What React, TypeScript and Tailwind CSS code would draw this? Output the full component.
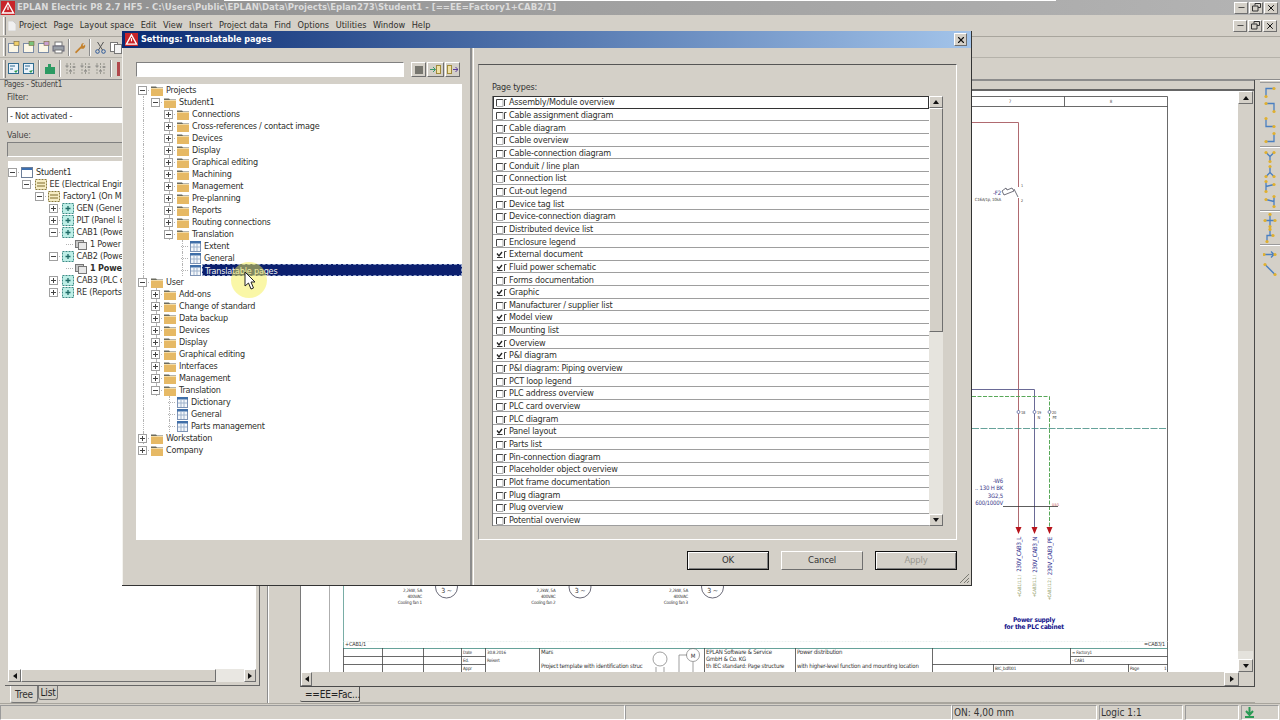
import type { ReactNode } from 'react';
import { Minus, X } from 'lucide-react';

const raised = 'border border-t-white border-l-white border-r-[#6f6f6f] border-b-[#6f6f6f]';
const sunken = 'border border-t-[#808080] border-l-[#808080] border-r-white border-b-white';

function Arrow({ dir }: { dir: 'up' | 'down' | 'left' | 'right' }) {
  const pts = { up: '1,6 4,2 7,6', down: '1,2 4,6 7,2', left: '6,1 2,4 6,7', right: '2,1 6,4 2,7' }[dir];
  return (
    <svg width="8" height="8" viewBox="0 0 8 8">
      <polygon points={pts} fill="#111" />
    </svg>
  );
}

function ScrollBtn({ dir, className = '' }: { dir: 'up' | 'down' | 'left' | 'right'; className?: string }) {
  return <div className={`flex items-center justify-center bg-[#d4d0c8] ${raised} ${className}`}><Arrow dir={dir} /></div>;
}

function Folder() {
  return (
    <svg width="12" height="11" viewBox="0 0 12 11" className="shrink-0">
      <path d="M0 1.5h5l1 1h6v1H0z" fill="#6b6b5e" />
      <rect x="0" y="3" width="12" height="8" fill="#e6b965" />
      <rect x="0" y="3" width="12" height="1" fill="#f4dca8" />
    </svg>
  );
}

function TableIcon() {
  return (
    <svg width="11" height="11" viewBox="0 0 11 11" className="shrink-0">
      <rect x="0.5" y="0.5" width="10" height="10" fill="#f4f7fb" stroke="#7d93b5" />
      <rect x="0" y="0" width="11" height="2.5" fill="#3f6ea8" />
      <path d="M4 3v7M7 3v7M1 6h9" stroke="#9fb3cc" />
    </svg>
  );
}

function TreeIcon({ kind }: { kind: string }) {
  if (kind === 'folder') return <Folder />;
  if (kind === 'table') return <TableIcon />;
  if (kind === 'window') {
    return (
      <svg width="12" height="11" viewBox="0 0 12 11" className="shrink-0">
        <rect x="0.5" y="0.5" width="11" height="10" fill="#fff" stroke="#6d7f99" />
        <rect x="1" y="1" width="10" height="2" fill="#3c6fb0" />
      </svg>
    );
  }
  if (kind === 'page') {
    return (
      <svg width="12" height="11" viewBox="0 0 12 11" className="shrink-0">
        <rect x="0.5" y="1.5" width="8" height="7" fill="#c9c9c9" stroke="#777" />
        <rect x="3.5" y="3.5" width="8" height="7" fill="#e8e8e8" stroke="#777" />
      </svg>
    );
  }
  if (kind === 'plus') {
    return (
      <svg width="12" height="11" viewBox="0 0 12 11" className="shrink-0">
        <rect x="0.5" y="0.5" width="11" height="10" fill="#bdeee6" stroke="#3c8c86" strokeDasharray="2 1" />
        <path d="M3.5 5.5h5M6 3v5" stroke="#1f6a66" strokeWidth="1.3" />
      </svg>
    );
  }
  return (
    <svg width="12" height="11" viewBox="0 0 12 11" className="shrink-0">
      <rect x="0.5" y="0.5" width="11" height="10" fill="#f6edc4" stroke="#8a7a3a" strokeDasharray="2 1" />
      <path d="M2 4h8M2 7h8" stroke="#7c6a2a" />
    </svg>
  );
}

type Node = {
  label: string;
  level: number;
  exp?: '+' | '-';
  icon: string;
  guides?: number[];
  selected?: boolean;
  bold?: boolean;
};

function TreeRow({ node, base, pitch }: { node: Node; base: number; pitch: number }) {
  const left = base + node.level * pitch;
  return (
    <div className="relative flex h-[12px] items-center" style={{ paddingLeft: left }}>
      {node.guides?.map((g) => (
        <span key={g} className="absolute top-0 bottom-0 w-px border-l border-dotted border-[#b4b4b4]" style={{ left: g }} />
      ))}
      <span className="absolute h-px w-[7px] border-t border-dotted border-[#b4b4b4]" style={{ left: left + 4 }} />
      <span className="relative flex h-[9px] w-[9px] shrink-0 items-center justify-center">
        {node.exp && (
          <span className="relative flex h-[9px] w-[9px] items-center justify-center border border-[#a0a0a0] bg-white">
            <span className="h-px w-[5px] bg-[#444]" />
            {node.exp === '+' && <span className="absolute h-[5px] w-px bg-[#444]" />}
          </span>
        )}
      </span>
      <span className="relative ml-[4px] flex"><TreeIcon kind={node.icon} /></span>
      <span
        className={`relative ml-[1px] whitespace-nowrap px-[2px] leading-[12px] ${
          node.selected ? 'flex-1 border border-dashed border-[#8fa0c8] bg-[#0b1f6e] text-[#f2f2f2] h-[12px] leading-[10px]' : 'text-[#30302c]'
        } ${node.bold ? 'font-bold' : ''}`}
      >
        {node.label}
      </span>
    </div>
  );
}

const settingsTree: Node[] = [
  { label: 'Projects', level: 0, exp: '-', icon: 'folder' },
  { label: 'Student1', level: 1, exp: '-', icon: 'folder', guides: [7] },
  ...['Connections', 'Cross-references / contact image', 'Devices', 'Display', 'Graphical editing', 'Machining', 'Management', 'Pre-planning', 'Reports', 'Routing connections'].map(
    (label) => ({ label, level: 2, exp: '+' as const, icon: 'folder', guides: [7, 33] }),
  ),
  { label: 'Translation', level: 2, exp: '-', icon: 'folder', guides: [7, 33] },
  { label: 'Extent', level: 3, icon: 'table', guides: [7, 46] },
  { label: 'General', level: 3, icon: 'table', guides: [7, 46] },
  { label: 'Translatable pages', level: 3, icon: 'table', guides: [7, 46], selected: true },
  { label: 'User', level: 0, exp: '-', icon: 'folder', guides: [7] },
  ...['Add-ons', 'Change of standard', 'Data backup', 'Devices', 'Display', 'Graphical editing', 'Interfaces', 'Management'].map(
    (label) => ({ label, level: 1, exp: '+' as const, icon: 'folder', guides: [7, 20] }),
  ),
  { label: 'Translation', level: 1, exp: '-', icon: 'folder', guides: [7, 20] },
  { label: 'Dictionary', level: 2, icon: 'table', guides: [7, 33] },
  { label: 'General', level: 2, icon: 'table', guides: [7, 33] },
  { label: 'Parts management', level: 2, icon: 'table', guides: [7, 33] },
  { label: 'Workstation', level: 0, exp: '+', icon: 'folder', guides: [7] },
  { label: 'Company', level: 0, exp: '+', icon: 'folder' },
];

const pagesTree: Node[] = [
  { label: 'Student1', level: 0, exp: '-', icon: 'window' },
  { label: 'EE (Electrical Engineering)', level: 1, exp: '-', icon: 'module' },
  { label: 'Factory1 (On Machine)', level: 2, exp: '-', icon: 'module' },
  { label: 'GEN (General)', level: 3, exp: '+', icon: 'plus' },
  { label: 'PLT (Panel layout)', level: 3, exp: '+', icon: 'plus' },
  { label: 'CAB1 (Power supply)', level: 3, exp: '-', icon: 'plus' },
  { label: '1 Power distribution', level: 4, icon: 'page' },
  { label: 'CAB2 (Power supply)', level: 3, exp: '-', icon: 'plus' },
  { label: '1 Power distribution', level: 4, icon: 'page', bold: true },
  { label: 'CAB3 (PLC cabinet)', level: 3, exp: '+', icon: 'plus' },
  { label: 'RE (Reports)', level: 3, exp: '+', icon: 'plus' },
];

const pageTypes: [string, boolean][] = [
  ['Assembly/Module overview', false],
  ['Cable assignment diagram', false],
  ['Cable diagram', false],
  ['Cable overview', false],
  ['Cable-connection diagram', false],
  ['Conduit / line plan', false],
  ['Connection list', false],
  ['Cut-out legend', false],
  ['Device tag list', false],
  ['Device-connection diagram', false],
  ['Distributed device list', false],
  ['Enclosure legend', false],
  ['External document', true],
  ['Fluid power schematic', true],
  ['Forms documentation', false],
  ['Graphic', true],
  ['Manufacturer / supplier list', false],
  ['Model view', true],
  ['Mounting list', false],
  ['Overview', true],
  ['P&I diagram', true],
  ['P&I diagram: Piping overview', false],
  ['PCT loop legend', false],
  ['PLC address overview', false],
  ['PLC card overview', false],
  ['PLC diagram', false],
  ['Panel layout', true],
  ['Parts list', false],
  ['Pin-connection diagram', false],
  ['Placeholder object overview', false],
  ['Plot frame documentation', false],
  ['Plug diagram', false],
  ['Plug overview', false],
  ['Potential overview', false],
];

function Check({ on }: { on: boolean }) {
  return (
    <svg width="12" height="11" viewBox="0 0 12 11" className="shrink-0">
      {on ? (
        <>
          <path d="M1 9.500h5.500" fill="none" stroke="#333" />
          <path d="M1 5.500l2 2.500 3-4" fill="none" stroke="#222" strokeWidth="1.300" />
        </>
      ) : (
        <>
          <path d="M.5 10V3.500h6.500" fill="none" stroke="#444" />
          <path d="M.5 10.500h6.500V3.500" fill="none" stroke="#aaa" />
        </>
      )}
      <path d="M8.500 10V3.500h2" fill="none" stroke="#444" />
    </svg>
  );
}

function WinButton({ children }: { children: ReactNode }) {
  return <div className={`flex h-[12px] w-[14px] items-center justify-center bg-[#d4d0c8] ${raised}`}>{children}</div>;
}

function WinControls() {
  return (
    <div className="flex gap-px">
      <WinButton><Minus size={9} strokeWidth={2} color="#222" /></WinButton>
      <WinButton>
        <svg width="9" height="9" viewBox="0 0 9 9"><path d="M3 2.500V.5h5.500v4H6M.5 3h5.500v5H.5z" fill="none" stroke="#333" /></svg>
      </WinButton>
      <WinButton><X size={10} strokeWidth={2.4} color="#111" /></WinButton>
    </div>
  );
}

function EplanLogo({ size }: { size: number }) {
  return (
    <svg width={size} height={size} viewBox="0 0 14 14" className="shrink-0">
      <rect width="14" height="14" fill="#c8242a" />
      <path d="M7 2l5.500 10h-11z" fill="none" stroke="#fff" strokeWidth="1.4" />
      <path d="M7 5.500v3.500" stroke="#fff" strokeWidth="1.2" />
    </svg>
  );
}

function Sep() {
  return <div className="mx-[2px] h-[17px] w-[2px] border-l border-r border-l-[#8c8c8c] border-r-white" />;
}

function Grip() {
  return <div className="ml-[2px] h-[18px] w-[3px] border-l border-r border-l-white border-r-[#808080]" />;
}

function Tool({ children }: { children: ReactNode }) {
  return <div className="flex h-[16px] w-[15px] items-center justify-center">{children}</div>;
}

function PageTool({ tint }: { tint: string }) {
  return (
    <svg width="13" height="13" viewBox="0 0 13 13">
      <rect x="1.500" y="2.500" width="10" height="9" fill="#fbf6e6" stroke="#7b8ca6" />
      <rect x="7" y="0.500" width="5" height="4" fill={tint} stroke="#7b6a3a" strokeWidth="0.6" />
    </svg>
  );
}

function ListTool() {
  return (
    <svg width="13" height="13" viewBox="0 0 13 13">
      <rect x="1.500" y="1.500" width="10" height="10" fill="#eaf3fb" stroke="#2f6b90" />
      <path d="M3 4h5M3 7h3" stroke="#2f6b90" />
      <path d="M7 9l4-1-2 3z" fill="#2a9a4a" />
    </svg>
  );
}

function FilterTool() {
  return (
    <svg width="13" height="14" viewBox="0 0 13 14" stroke="#9a9a90" fill="none">
      <path d="M3 1v12M6.500 1v12M10 1v12" strokeDasharray="2 1" />
      <path d="M1.500 4h3M5 9h3M8.500 5h3" stroke="#777" />
    </svg>
  );
}

function Toolbars() {
  return (
    <>
      <div className="flex h-[21px] items-center border-b border-[#b5b2aa] pl-[1px]">
        <Grip />
        <Tool><PageTool tint="#f1cf6b" /></Tool>
        <Tool><PageTool tint="#79c27a" /></Tool>
        <Tool><PageTool tint="#c9a0d0" /></Tool>
        <Tool>
          <svg width="13" height="13" viewBox="0 0 13 13">
            <rect x="3" y="1" width="7" height="4" fill="#fff" stroke="#777" />
            <rect x="1" y="5" width="11" height="5" fill="#9aa0a8" stroke="#667" />
            <rect x="3" y="9" width="7" height="3" fill="#fff" stroke="#777" />
          </svg>
        </Tool>
        <Sep />
        <Tool>
          <svg width="13" height="13" viewBox="0 0 13 13"><path d="M2 11l6-6a3 3 0 0 1 3-3L9.500 4 10.500 5 12 3.500a3 3 0 0 1-4 4l-5 5z" fill="#c4812c" /></svg>
        </Tool>
        <Sep />
        <Tool>
          <svg width="13" height="13" viewBox="0 0 13 13" fill="none" stroke="#2e5a9a"><circle cx="3.500" cy="10.500" r="1.800" /><circle cx="9.500" cy="10.500" r="1.800" /><path d="M4.500 9L9.500 1M8.500 9L3.500 1" stroke="#555" /></svg>
        </Tool>
        <Tool>
          <svg width="13" height="13" viewBox="0 0 13 13"><rect x="1.500" y="1.500" width="7" height="9" fill="#fff" stroke="#777" /><rect x="5.500" y="3.500" width="7" height="9" fill="#f3f3f3" stroke="#777" /></svg>
        </Tool>
      </div>
      <div className="flex h-[22px] items-center border-b border-[#8c8c8c] pl-[1px]">
        <Grip />
        <Tool><ListTool /></Tool>
        <Tool><ListTool /></Tool>
        <Sep />
        <Tool>
          <svg width="14" height="14" viewBox="0 0 14 14"><path d="M2 5h3V2h3v3h4v7H2z" fill="#2c9a62" /></svg>
        </Tool>
        <Sep />
        <Tool><FilterTool /></Tool>
        <Tool><FilterTool /></Tool>
        <Tool><FilterTool /></Tool>
        <Sep />
        <div className="ml-[3px] h-[14px] w-[3px] bg-[#b0484c]" />
      </div>
    </>
  );
}

const menuItems = ['Project', 'Page', 'Layout space', 'Edit', 'View', 'Insert', 'Project data', 'Find', 'Options', 'Utilities', 'Window', 'Help'];

function LeftPanel() {
  return (
    <div className="flex w-[262px] shrink-0 flex-col pl-[3px] pr-[2px]">
      <div className="h-[11px] pl-[1px] text-[8px] leading-[9px] text-[#444]">Pages - Student1</div>
      <div className="flex flex-1 flex-col pl-[4px] pr-[1px]">
        <div className="h-[16px] leading-[13px] text-[#444]">Filter:</div>
        <div className={`h-[16px] w-[246px] bg-white pl-[2px] leading-[16px] text-[#333] ${sunken}`}>- Not activated -</div>
        <div className="mt-[6px] h-[13px] leading-[13px] text-[#444]">Value:</div>
        <div className={`h-[15px] w-[246px] bg-[#c9c6be] ${sunken}`} />
        <div className="mt-[4px] -ml-[2px] h-[525px] w-[255px] border-b border-r border-[#666] pb-[3px] pl-[3px] pr-[3px]">
          <div className="flex h-full flex-col bg-white">
            <div className="flex-1 pt-[5px]">
              {pagesTree.map((n, i) => (
                <TreeRow key={i} node={n} base={0} pitch={13.5} />
              ))}
            </div>
            <div className="flex h-[13px] bg-[#d4d0c8]">
              <ScrollBtn dir="left" className="w-[13px]" />
              <div className={`h-full flex-1 bg-[#d4d0c8] ${raised}`} />
              <div className="h-full w-[28px] bg-[#e9e7e2]" />
              <ScrollBtn dir="right" className="w-[12px]" />
            </div>
          </div>
        </div>
        <div className="flex pl-[3px]">
          <div className="flex h-[17px] w-[28px] items-center justify-center rounded-b-[3px] border-b border-r border-l border-[#777] border-l-white text-[10px] text-[#333]">Tree</div>
          <div className="flex h-[14px] w-[20px] items-center justify-center rounded-b-[3px] border border-t-0 border-[#777] bg-[#d0cdc5] text-[10px] text-[#222]">List</div>
        </div>
      </div>
    </div>
  );
}

const rightTools = [
  { d: 'M3 11V3h8', ends: [[3, 11], [11, 3]] },
  { d: 'M3 3h8v8', ends: [[3, 3], [11, 11]] },
  { d: 'M3 3v8h8', ends: [[3, 3], [11, 11]] },
  { d: 'M3 11h8V3', ends: [[3, 11], [11, 3]] },
  null,
  { d: 'M3 3l4 4 4-4M7 7v5', ends: [[3, 3], [11, 3], [7, 12]] },
  { d: 'M7 2v6M7 8l-4 4M7 8l4 4', ends: [[7, 2], [3, 12], [11, 12]] },
  { d: 'M3 2v10M3 7l8-2', ends: [[3, 2], [3, 12], [11, 5]] },
  { d: 'M11 2v10M11 7l-8-2', ends: [[11, 2], [11, 12], [3, 5]] },
  null,
  { d: 'M7 1v12M2 7h10', ends: [[7, 1], [2, 7], [12, 7], [7, 13]] },
  { d: 'M7 1v6H4v6M7 7h3', ends: [[7, 1], [4, 13], [10, 7]] },
  null,
  { d: 'M1 7h10M8 4l3 3-3 3', ends: [[1, 7], [12, 7]] },
  { d: 'M2 2l10 10', ends: [[2, 2], [12, 12]] },
];

function RightToolbar() {
  return (
    <div className="flex w-[25px] shrink-0 flex-col items-center pl-[5px]">
      <div className="mb-[2px] h-[3px] w-full border-t border-b border-t-white border-b-[#9a9a9a]" />
      {rightTools.map((t, i) =>
        t ? (
          <svg key={i} width="14" height="15" viewBox="0 0 14 14">
            <path d={t.d} fill="none" stroke="#4a7fc0" strokeWidth="1.300" />
            {t.ends.map(([x, y], j) => (
              <circle key={j} cx={x} cy={y} r="1.600" fill="#e0b030" />
            ))}
          </svg>
        ) : (
          <div key={i} className="my-[1px] h-[2px] w-full border-t border-b border-t-[#9a9a9a] border-b-white" />
        ),
      )}
    </div>
  );
}

function MotorLabel({ x, n }: { x: number; n: number }) {
  return (
    <g>
      <g fontSize="4.500" textAnchor="end" fill="#333">
        <text x={x} y="592">2,2kW, 5A</text>
        <text x={x} y="598">400VAC</text>
        <text x={x} y="604">Cooling fan {n}</text>
      </g>
      <circle cx={x + 24.500} cy="587" r="11" fill="none" stroke="#445" strokeWidth="0.800" />
      <text x={x + 24.500} y="593" fontSize="7" textAnchor="middle" fill="#333">3 ~</text>
    </g>
  );
}

function Schematic() {
  return (
    <svg viewBox="301 91 937 581" width="937" height="581" className="block bg-white">
      <g stroke="#444" fill="none" strokeWidth="0.800">
        <path d="M972 96.500H1167.500V672M972 106.500H1167.500M1064.500 96.500v10" />
        <path d="M329.500 91V672" stroke="#999" />
      </g>
      <g fontSize="4.500" fill="#555" textAnchor="middle">
        <text x="1010" y="103">7</text>
        <text x="1111" y="103">8</text>
      </g>
      <path d="M972 122.500H1018.500V187M1018.500 198V530" fill="none" stroke="#b06a70" strokeWidth="1" />
      <path d="M972 389.500H1034.500V530" fill="none" stroke="#6a6a96" strokeWidth="1" />
      <path d="M972 396.500H1049.500V530" fill="none" stroke="#58a858" strokeWidth="1" strokeDasharray="4 1.500" />
      <path d="M972 428.500H1167.500" stroke="#3f8a80" strokeWidth="0.800" strokeDasharray="7 1.500" />
      <path d="M1004 195l10-4 -2-3 -5 2 -1-2 -4 3 2 4zM1014 189l4 8" fill="none" stroke="#334" strokeWidth="0.700" />
      <text x="1001" y="195" fontSize="6" textAnchor="end" fill="#3a3a8a">-F2</text>
      <text x="1001" y="200.500" fontSize="4.300" textAnchor="end" fill="#444">C16A/1p, 10kA</text>
      <text x="1021" y="187" fontSize="3.800" fill="#444">1</text>
      <text x="1021" y="202" fontSize="3.800" fill="#444">2</text>
      {[1018.5, 1034.5, 1049.5].map((x, i) => (
        <g key={x}>
          <circle cx={x} cy="412" r="1.500" fill="#fff" stroke="#4a5a9a" strokeWidth="0.700" />
          <text x={x + 2.500} y="414" fontSize="4" fill="#444">{18 + i}</text>
          {i > 0 && <text x={x + 3} y="419" fontSize="4" fill="#444">{i === 1 ? 'N' : 'PE'}</text>}
          <path d={`M${x - 3} 527h6l-3 7z`} fill="#b8141c" />
        </g>
      ))}
      <g fontSize="6" textAnchor="end" fill="#3a3a8a">
        <text x="1003" y="483">-W6</text>
        <text x="1003" y="490">.. 130 H BK</text>
        <text x="1003" y="497.500">3G2,5</text>
        <text x="1003" y="505">600/1000V</text>
      </g>
      <path d="M1003 506.500H1058" stroke="#333" strokeWidth="0.800" />
      <text x="1052" y="505.500" fontSize="3.500" fill="#c04048">0,5/1</text>
      <g fontSize="6" fill="#26268a" textAnchor="end">
        <text transform="rotate(-90 1021 537)" x="1021" y="537">230V_CAB3_L</text>
        <text transform="rotate(-90 1037 537)" x="1037" y="537">230V_CAB3_N</text>
        <text transform="rotate(-90 1052 537)" x="1052" y="537">230V_CAB3_PE</text>
      </g>
      <g fontSize="4.500" fill="#7c8a4a" textAnchor="end">
        <text transform="rotate(-90 1020.500 575)" x="1020.500" y="575">+CAB1/1.1 /</text>
        <text transform="rotate(-90 1036 575)" x="1036" y="575">+CAB3/1.1 /</text>
        <text transform="rotate(-90 1051 578)" x="1051" y="578">+CAB1/1.2 /</text>
      </g>
      <g fontSize="6.500" fontWeight="700" fill="#10108a" textAnchor="middle">
        <text x="1034" y="622">Power supply</text>
        <text x="1034" y="629">for the PLC cabinet</text>
      </g>
      <MotorLabel x={422} n={1} />
      <MotorLabel x={555.5} n={2} />
      <MotorLabel x={688} n={3} />
      <path d="M343.500 91V648" stroke="#3f8a80" strokeWidth="0.700" />
      <path d="M343.500 648.500H1167.500" stroke="#3f8a80" strokeWidth="0.800" />
      <path d="M343.500 641.500H1167.500" stroke="#e4eeec" strokeWidth="0.800" strokeDasharray="2 1" />
      <text x="345" y="645.500" fontSize="5.500" fill="#333">+CAB1/1</text>
      <text x="1165" y="645.500" fontSize="5.500" fill="#333" textAnchor="end">=CAB3/1</text>
      <g stroke="#444" fill="none" strokeWidth="0.800">
        <path d="M343.500 648V672M382.500 648V672M423.500 648V672M461.500 648V672M485.500 648V672M539.500 648V672M704.500 648V672M795.500 648V672M932.500 648V672" />
        <path d="M343.500 656.500H485.500M343.500 664.500H485.500M932.500 664.500H1167.500M1070.500 656.500H1167.500M1070.500 648V664M993.500 664V672M1128.500 664V672" />
      </g>
      <g fontSize="4.500" fill="#333">
        <text x="463" y="654">Date</text>
        <text x="487" y="654">30.8.2016</text>
        <text x="463" y="662">Ed.</text>
        <text x="487" y="662">Reisert</text>
        <text x="463" y="670">Appr</text>
        <text x="1072" y="654">= Factory1</text>
        <text x="1072" y="662">- CAB1</text>
        <text x="995" y="670">BIC_bdf001</text>
        <text x="1130" y="670">Page</text>
        <text x="1164" y="670">1</text>
      </g>
      <g fontSize="6" fill="#333">
        <text x="541" y="654">Mars</text>
        <text x="541" y="668">Project template with identification struc</text>
        <text x="706" y="654">EPLAN Software &amp; Service</text>
        <text x="706" y="661">GmbH &amp; Co. KG</text>
        <text x="706" y="668">th IEC standard: Page structure</text>
        <text x="797" y="654">Power distribution</text>
        <text x="797" y="668">with higher-level function and mounting location</text>
      </g>
      <g fill="none" stroke="#777" strokeWidth="0.700">
        <circle cx="660" cy="659" r="7" />
        <circle cx="693" cy="655" r="6.500" />
        <path d="M656 667v5M664 667v5M687 655h-8v17M693 662v10" />
      </g>
      <text x="693" y="657.500" fontSize="6" textAnchor="middle" fill="#333">M</text>
    </svg>
  );
}

function DocArea() {
  return (
    <div className="flex w-[955px] shrink-0 flex-col">
      <div className="flex h-[607px] flex-col border-b border-r border-l border-[#4a4a4a] border-l-[#7a7a7a]">
        <div className="h-[9px] border-t border-[#8c8c8c]" />
        <div className="flex h-[583px] flex-col border-t-[2px] border-[#666]">
          <div className="flex h-[581px]">
            <Schematic />
            <div className="flex w-[15px] flex-col bg-[#d4d0c8]">
              <ScrollBtn dir="up" className="h-[13px]" />
              <div className="flex-1" />
              <div className="h-[8px] bg-[#e4e2dc]" />
              <ScrollBtn dir="down" className="h-[13px]" />
            </div>
          </div>
        </div>
        <div className="flex h-[14px] bg-[#d4d0c8]">
          <ScrollBtn dir="left" className="w-[11px]" />
          <div className="flex-1" />
          <ScrollBtn dir="right" className="w-[15px]" />
          <div className="w-[15px]" />
        </div>
      </div>
      <div className="flex h-[16px]">
        <div className="flex h-[15px] w-[60px] items-center gap-[2px] rounded-b-[2px] border-r border-b border-[#555] pl-[2px] text-[10px] text-[#222]">
          <svg width="8" height="10" viewBox="0 0 8 10" className="mr-[1px]"><path d="M0 0h5l3 3v7H0z" fill="#eef0f2" /></svg>
          <span>==EE=Fac...</span>
        </div>
        <div className="flex-1 border-b border-[#a8a59d]" />
      </div>
    </div>
  );
}

function StatusBar() {
  const seg = `h-full border border-t-[#9a9a9a] border-l-[#9a9a9a] border-r-white border-b-white`;
  return (
    <div className="flex h-[17px] items-stretch border-t border-[#a8a59d] pt-[1px] tracking-normal text-[#333]">
      <div className={`${seg} w-[625px]`} />
      <div className={`${seg} w-[327px]`} />
      <div className={`${seg} w-[145px] pl-[1px] text-[10px] leading-[13px]`}>ON: 4,00 mm</div>
      <div className={`${seg} ml-[2px] w-[84px] pl-[1px] text-[10px] leading-[13px]`}>Logic 1:1</div>
      <div className={`${seg} ml-[2px] w-[54px]`} />
      <div className={`${seg} ml-[2px] flex w-[38px] justify-start pl-[1px]`}>
        <svg width="13" height="13" viewBox="0 0 13 13"><path d="M6.500 1v8M3 5l3.500 4L10 5M2 11h9" fill="none" stroke="#2b9a55" strokeWidth="2" /></svg>
      </div>
    </div>
  );
}

function SettingsDialog() {
  return (
    <div className="absolute left-[122px] top-[31px] flex h-[555px] w-[850px] flex-col border-b border-r border-[#333] bg-[#d4d0c8] shadow-[inset_1px_1px_0_#f4f3ef]">
      <div className="flex h-[17px] items-center bg-gradient-to-r from-[#0b2a72] to-[#a3c4ea] pl-[3px] pr-[4px]">
        <EplanLogo size={13} />
        <span className="ml-[3px] flex-1 text-[9px] font-bold tracking-normal text-white">Settings: Translatable pages</span>
        <div className={`flex h-[13px] w-[13px] items-center justify-center bg-[#d4d0c8] ${raised}`}>
          <X size={10} strokeWidth={2.6} color="#111" />
        </div>
      </div>
      <div className="flex flex-1">
        <div className="w-[348px] pl-[14px] pt-[14px]">
          <div className="flex h-[15px] items-center">
            <div className={`h-[15px] w-[268px] bg-white ${sunken}`} />
            <div className="ml-[7px] flex h-[15px] gap-px">
              <div className={`flex w-[15px] items-center justify-center bg-[#d4d0c8] ${raised}`}><div className="h-[8px] w-[8px] bg-[#77766f]" /></div>
              <div className={`flex w-[17px] items-center justify-center bg-[#d4d0c8] ${raised}`}>
                <svg width="11" height="9" viewBox="0 0 11 9"><path d="M0 4.500h5M3 2l2.500 2.500L3 7" stroke="#3a9a6a" fill="none" /><rect x="6.500" y="0.500" width="4" height="8" fill="#f0e2a8" stroke="#a08a3a" /></svg>
              </div>
              <div className={`flex w-[15px] items-center justify-center bg-[#d4d0c8] ${raised}`}>
                <svg width="11" height="9" viewBox="0 0 11 9"><rect x="0.500" y="0.500" width="4" height="8" fill="#f0e2a8" stroke="#a08a3a" /><path d="M6 4.500h5M8.500 2L11 4.500 8.500 7" stroke="#5a3a9a" fill="none" /></svg>
              </div>
            </div>
          </div>
          <div className="mt-[7px] h-[456px] w-[326px] bg-white">
            {settingsTree.map((n, i) => (
              <TreeRow key={i} node={n} base={2} pitch={13} />
            ))}
          </div>
        </div>
        <div className="h-full w-[4px] border-l-2 border-r border-l-[#8c8c8c] border-r-white" />
        <div className="relative flex-1 pl-[4px] pt-[16px]">
          <div className="h-[476px] w-[479px] border border-t-[#555] border-l-[#8c8c8c] border-r-white border-b-white pl-[13px] pt-[16px]">
            <div className="h-[15px] leading-[13px] text-[#333]">Page types:</div>
            <div className="flex h-[430px] w-[451px]">
              <div className="h-[430px] w-[437px] overflow-hidden border-l border-[#777] bg-white">
                {pageTypes.map(([label, on], i) => (
                  <div
                    key={label}
                    className={`flex h-[12.67px] items-center gap-[1px] overflow-hidden border-b border-[#9e9e9e] pl-[3px] ${i === 0 ? 'outline outline-[#333] -outline-offset-1' : ''}`}
                  >
                    <Check on={on} />
                    <span className="pt-px leading-[10px] text-[#2f2f2c]">{label}</span>
                  </div>
                ))}
              </div>
              <div className="flex w-[14px] flex-col bg-[#e6e4de]">
                <ScrollBtn dir="up" className="h-[12px]" />
                <div className={`h-[224px] bg-[#d4d0c8] ${raised}`} />
                <div className="flex-1" />
                <ScrollBtn dir="down" className="h-[12px]" />
              </div>
            </div>
          </div>
          <div className="mt-[11px] flex w-[479px] justify-end gap-[12px] text-[9.5px]">
            <button className="h-[19px] w-[82px] border border-[#111] bg-[#d4d0c8] shadow-[inset_1px_1px_0_#fff,inset_-1px_-1px_0_#808080] text-[#333]">OK</button>
            <button className={`h-[19px] w-[82px] bg-[#d4d0c8] text-[#333] ${raised}`}>Cancel</button>
            <button className="h-[19px] w-[82px] border border-[#111] bg-[#d4d0c8] text-[#9a9890] shadow-[inset_1px_1px_0_#fff,inset_-1px_-1px_0_#808080]">Apply</button>
          </div>
          <svg width="11" height="11" viewBox="0 0 11 11" className="absolute bottom-[1px] right-[1px]">
            <path d="M10 1L1 10M10 5L5 10M10 8L8 10" stroke="#7a7a72" strokeWidth="1" />
          </svg>
        </div>
      </div>
    </div>
  );
}

export default function App() {
  return (
    <div className="relative flex h-[720px] w-[1280px] flex-col overflow-hidden bg-[#d4d0c8] text-[9px] tracking-[-0.2px] [font-family:'DejaVu_Sans_Condensed','Liberation_Sans',sans-serif]">
      <div className="flex h-[15px] items-center bg-gradient-to-r from-[#8f8f8f] to-[#b4b4b4] pl-[1px] pr-[2px]">
        <EplanLogo size={14} />
        <span className="ml-[2px] flex-1 whitespace-nowrap text-[9.500px] font-bold tracking-normal text-[#dcdcdc]">
          EPLAN Electric P8 2.7 HF5 - C:\Users\Public\EPLAN\Data\Projects\Eplan273\Student1 - [==EE=Factory1+CAB2/1]
        </span>
        <WinControls />
      </div>
      <div className="flex h-[22px] items-center border-b border-[#a8a59d] pl-[1px] pr-[3px]">
        <Grip />
        <svg width="8" height="10" viewBox="0 0 8 10" className="ml-[2px] mr-[3px]"><path d="M0 0h5l3 3v7H0z" fill="#f0f0f0" stroke="#bbb" strokeWidth="0.500" /></svg>
        <div className="flex flex-1 gap-[6.500px] text-[9.100px] tracking-normal text-[#2f2f2c]">
          {menuItems.map((m) => (
            <span key={m}>{m}</span>
          ))}
        </div>
        <WinControls />
      </div>
      <Toolbars />
      <div className="flex h-[623px]">
        <LeftPanel />
        <div className="flex w-[38px] shrink-0 pl-[5px]">
          <div className="h-full w-[2px] border-l border-r border-l-[#8c8c8c] border-r-white" />
        </div>
        <DocArea />
        <RightToolbar />
      </div>
      <StatusBar />
      <SettingsDialog />
      <div className="pointer-events-none absolute left-[224px] top-0 h-px w-[832px] bg-white" />
      <div className="pointer-events-none absolute left-[231px] top-[262px] h-[36px] w-[36px] rounded-full bg-[#f5f050]/50" />
      <svg width="14" height="19" viewBox="0 0 14 19" className="pointer-events-none absolute left-[244px] top-[271px]">
        <path d="M1 1v14l3.500-3 2.500 6 2.500-1-2.500-6H11z" fill="#fff" stroke="#222" />
      </svg>
    </div>
  );
}
